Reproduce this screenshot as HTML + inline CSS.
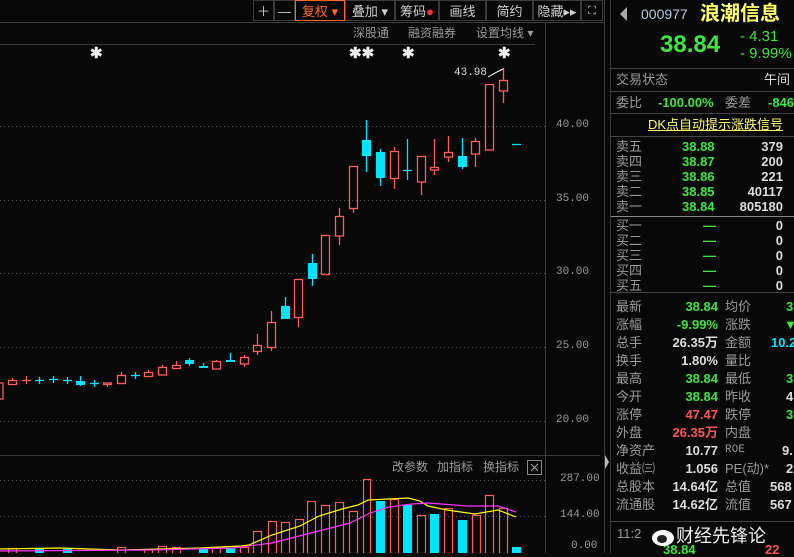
<!DOCTYPE html>
<html><head><meta charset="utf-8"><style>
body{margin:0;width:794px;height:553px;background:#080808;overflow:hidden;position:relative;font-family:"Liberation Sans","Noto Sans CJK SC",sans-serif;}
.a{position:absolute;white-space:nowrap;line-height:1;}
.g{color:#3ee63e}.w{color:#dcdcdc}.l{color:#9a9a9a;font-weight:normal}.r{color:#ff5555}.c{color:#00e5ff}
.tb{position:absolute;top:0;height:21px;border:1px solid #3a3a3a;color:#cfcfcf;font-size:13px;line-height:21px;text-align:center;box-sizing:border-box}
.rp div{position:absolute;white-space:nowrap;line-height:1;font-size:13px}
.st{position:absolute;color:#eee;font-size:15px;font-weight:bold;line-height:1}
</style></head><body>
<svg width="794" height="553" style="position:absolute;left:0;top:0">
<g stroke="#555" stroke-dasharray="1,3" stroke-width="1">
<line x1="0" y1="126.5" x2="545" y2="126.5"/><line x1="0" y1="200.5" x2="545" y2="200.5"/><line x1="0" y1="273.5" x2="545" y2="273.5"/><line x1="0" y1="347.5" x2="545" y2="347.5"/><line x1="0" y1="421.5" x2="545" y2="421.5"/>
<line x1="0" y1="480.5" x2="545" y2="480.5"/><line x1="0" y1="516.5" x2="545" y2="516.5"/>
</g>
<g stroke="#3a3a3a"><line x1="0" y1="22.5" x2="604" y2="22.5"/><line x1="0" y1="44.5" x2="535" y2="44.5"/><line x1="0" y1="455.5" x2="600" y2="455.5"/><line x1="545.5" y1="22" x2="545.5" y2="553"/><line x1="604.5" y1="0" x2="604.5" y2="553"/><line x1="610.5" y1="0" x2="610.5" y2="553"/></g>
<polygon points="605,455 609,462 605,469" fill="#bbb"/>
<g stroke="#ff5c5c" fill="none" stroke-width="1.3">
<rect x="-3" y="383" width="6" height="16"/>
<rect x="8.5" y="380.5" width="8" height="4"/><line x1="12.5" y1="378" x2="12.5" y2="380"/>
<line x1="22" y1="380.5" x2="31" y2="380.5"/><line x1="26.5" y1="376" x2="26.5" y2="384"/>
<rect x="103.5" y="383" width="8" height="1.5"/><line x1="107.5" y1="384" x2="107.5" y2="387"/>
<rect x="117.5" y="375.5" width="8" height="8"/><line x1="121.5" y1="372" x2="121.5" y2="375"/>
<rect x="144.5" y="372.5" width="8" height="4"/><line x1="148.5" y1="370" x2="148.5" y2="372"/>
<rect x="158.5" y="367.5" width="8" height="7.5"/><line x1="162.5" y1="365" x2="162.5" y2="367"/>
<rect x="172.5" y="365.5" width="8" height="3"/><line x1="176.5" y1="361" x2="176.5" y2="365"/>
<rect x="212.5" y="361.5" width="8" height="7.5"/><line x1="216.5" y1="360" x2="216.5" y2="361"/>
<rect x="240.5" y="357.5" width="8" height="6.5"/><line x1="244.5" y1="355" x2="244.5" y2="357"/><line x1="244.5" y1="364" x2="244.5" y2="367"/>
<rect x="253.5" y="345.5" width="8" height="6"/><line x1="257.5" y1="334" x2="257.5" y2="345"/><line x1="257.5" y1="351" x2="257.5" y2="355"/>
<rect x="267.5" y="322.5" width="8" height="25"/><line x1="271.5" y1="311" x2="271.5" y2="322"/><line x1="271.5" y1="347" x2="271.5" y2="351"/>
<rect x="294.5" y="279.5" width="8" height="38"/><line x1="298.5" y1="317" x2="298.5" y2="327"/>
<rect x="321.5" y="235.5" width="8" height="39"/>
<rect x="335.5" y="216.5" width="8" height="19.5"/><line x1="339.5" y1="208" x2="339.5" y2="216"/><line x1="339.5" y1="236" x2="339.5" y2="245"/>
<rect x="349.5" y="166.5" width="8" height="42"/><line x1="353.5" y1="208" x2="353.5" y2="213"/>
<rect x="390.5" y="151.5" width="8" height="27"/><line x1="394.5" y1="147" x2="394.5" y2="151"/><line x1="394.5" y1="178" x2="394.5" y2="189"/>
<rect x="417.5" y="156.5" width="8" height="25.5"/><line x1="421.5" y1="182" x2="421.5" y2="195"/>
<rect x="430.5" y="167.5" width="8" height="2.5"/><line x1="434.5" y1="139" x2="434.5" y2="167"/><line x1="434.5" y1="170" x2="434.5" y2="175"/>
<rect x="444.5" y="152.5" width="8" height="4.5"/><line x1="448.5" y1="136" x2="448.5" y2="152"/><line x1="448.5" y1="157" x2="448.5" y2="162"/>
<rect x="471.5" y="141.5" width="8" height="12.5"/><line x1="475.5" y1="138" x2="475.5" y2="141"/><line x1="475.5" y1="154" x2="475.5" y2="167"/>
<rect x="485.5" y="84.5" width="8" height="65.5"/>
<rect x="499.5" y="80.5" width="8" height="10.5"/><line x1="503.5" y1="68" x2="503.5" y2="80"/><line x1="503.5" y1="91" x2="503.5" y2="103"/>
</g>
<g fill="#00e5ff" stroke="#00e5ff" stroke-width="1.3">
<line x1="35" y1="380.5" x2="44" y2="380.5"/><line x1="39.5" y1="377" x2="39.5" y2="384"/>
<line x1="49" y1="379.5" x2="58" y2="379.5"/><line x1="53.5" y1="376" x2="53.5" y2="383"/>
<line x1="63" y1="380.5" x2="72" y2="380.5"/><line x1="67.5" y1="377" x2="67.5" y2="384"/>
<rect x="76" y="381" width="9" height="4" stroke="none"/><line x1="80.5" y1="376" x2="80.5" y2="386"/>
<line x1="90" y1="383.5" x2="99" y2="383.5"/><line x1="94.5" y1="380" x2="94.5" y2="387"/>
<line x1="131" y1="375.5" x2="140" y2="375.5"/><line x1="135.5" y1="372" x2="135.5" y2="379"/>
<rect x="185" y="360" width="9" height="4" stroke="none"/><line x1="189.5" y1="358" x2="189.5" y2="366"/>
<rect x="199" y="366" width="9" height="2" stroke="none"/><line x1="203.5" y1="363" x2="203.5" y2="367"/>
<rect x="226" y="360" width="9" height="2" stroke="none"/><line x1="230.5" y1="353" x2="230.5" y2="361"/>
<rect x="281" y="306" width="9" height="13" stroke="none"/><line x1="285.5" y1="297" x2="285.5" y2="306"/>
<rect x="308" y="263" width="9" height="16" stroke="none"/><line x1="312.5" y1="254" x2="312.5" y2="286"/>
<rect x="362" y="140" width="9" height="16" stroke="none"/><line x1="366.5" y1="120" x2="366.5" y2="172"/>
<rect x="376" y="152" width="9" height="26" stroke="none"/><line x1="380.5" y1="149" x2="380.5" y2="186"/>
<line x1="403" y1="170.5" x2="412" y2="170.5"/><line x1="407.5" y1="139" x2="407.5" y2="180"/>
<rect x="458" y="156" width="9" height="11" stroke="none"/><line x1="462.5" y1="138" x2="462.5" y2="169"/>
<line x1="512" y1="144.5" x2="521" y2="144.5"/>
</g>
<polyline points="488,77 497,72 503,69" stroke="#fff" fill="none"/>
<g stroke="#ff5c5c" fill="none" stroke-width="1.2">
<rect x="253.5" y="531.5" width="8" height="22"/><rect x="268.5" y="521.5" width="8" height="32"/><rect x="281.5" y="522.5" width="8" height="31"/><rect x="295.5" y="519.5" width="8" height="34"/>
<rect x="307.5" y="501.5" width="8" height="52"/><rect x="321.5" y="505.5" width="8" height="48"/><rect x="335.5" y="502.5" width="8" height="51"/><rect x="349.5" y="511.5" width="8" height="42"/><rect x="363.5" y="479.5" width="7" height="74"/>
<rect x="390.5" y="499.5" width="8" height="54"/><rect x="417.5" y="515.5" width="8" height="38"/><rect x="444.5" y="508.5" width="8" height="45"/><rect x="472.5" y="515.5" width="8" height="38"/><rect x="485.5" y="495.5" width="8" height="58"/><rect x="499.5" y="508.5" width="8" height="45"/>
<rect x="8.5" y="548.5" width="8" height="5"/><rect x="117.5" y="547.5" width="8" height="6"/><rect x="144.5" y="549.5" width="8" height="4"/><rect x="158.5" y="546.5" width="8" height="7"/><rect x="172.5" y="547.5" width="8" height="6"/><rect x="212.5" y="547.5" width="8" height="6"/><rect x="240.5" y="547.5" width="8" height="6"/>
</g>
<g fill="#00e5ff">
<rect x="376" y="501" width="9" height="52"/><rect x="403" y="505" width="9" height="48"/><rect x="430" y="514" width="9" height="39"/><rect x="458" y="520" width="9" height="33"/><rect x="512" y="547" width="9" height="6"/>
<rect x="35" y="549" width="9" height="4"/><rect x="63" y="549" width="9" height="4"/><rect x="199" y="549" width="9" height="4"/><rect x="226" y="548" width="9" height="5"/>
</g>
<polyline fill="none" stroke="#ffff00" stroke-width="1.2" points="0,549 60,548 120,550 200,548 241,546 249,545 272,535 300,526 319,516 342,509 358,505 368,500 389,499 408,498 420,501 428,506 447,510 475,514 498,510 516,517"/>
<polyline fill="none" stroke="#ff33ff" stroke-width="1.2" points="0,551 150,550 233,548 272,543 311,533 350,523 370,513 389,507 412,504 428,503 467,506 498,506 516,512"/>
<rect x="527.5" y="460.5" width="14" height="14" fill="none" stroke="#888"/>
<path d="M531 464l7 7M538 464l-7 7" stroke="#aaa"/>
<g stroke="#444"><line x1="611" y1="68.5" x2="794" y2="68.5"/><line x1="611" y1="91.5" x2="794" y2="91.5"/><line x1="611" y1="113.5" x2="794" y2="113.5"/><line x1="611" y1="136.5" x2="794" y2="136.5"/><line x1="611" y1="292.5" x2="794" y2="292.5"/><line x1="611" y1="521.5" x2="794" y2="521.5"/></g>
<line x1="611" y1="216.5" x2="794" y2="216.5" stroke="#888"/>
<polygon points="627,7 627,21 620,14" fill="#aaa"/>
</svg>
<div class="tb" style="left:253px;width:21px">＋</div>
<div class="tb" style="left:274px;width:21px">—</div>
<div class="tb" style="left:295px;width:50px;color:#ff6a1a;border-color:#ff6a1a">复权 ▾</div>
<div class="tb" style="left:345px;width:50px">叠加 ▾</div>
<div class="tb" style="left:395px;width:44px">筹码<span style="color:#f33">●</span></div>
<div class="tb" style="left:439px;width:47px">画线</div>
<div class="tb" style="left:486px;width:47px">简约</div>
<div class="tb" style="left:533px;width:48px">隐藏▸▸</div>
<div class="tb" style="left:581px;width:22px;font-size:11px">⛶</div>
<div class="a l" style="left:353px;top:27px;font-size:12px">深股通</div>
<div class="a l" style="left:408px;top:27px;font-size:12px">融资融券</div>
<div class="a l" style="left:476px;top:27px;font-size:12px">设置均线 ▾</div>
<div class="st" style="left:90px;top:46px">✱</div><div class="st" style="left:349px;top:46px">✱✱</div><div class="st" style="left:402px;top:46px">✱</div><div class="st" style="left:498px;top:46px">✱</div>
<div class="a w" style="left:454px;top:68px;font-size:11px;font-family:'Liberation Mono',monospace">43.98</div>
<div class="a l" style="left:556px;top:120px;font-size:11px;font-family:'Liberation Mono',monospace">40.00</div>
<div class="a l" style="left:556px;top:194px;font-size:11px;font-family:'Liberation Mono',monospace">35.00</div>
<div class="a l" style="left:556px;top:267px;font-size:11px;font-family:'Liberation Mono',monospace">30.00</div>
<div class="a l" style="left:556px;top:341px;font-size:11px;font-family:'Liberation Mono',monospace">25.00</div>
<div class="a l" style="left:556px;top:415px;font-size:11px;font-family:'Liberation Mono',monospace">20.00</div>
<div class="a l" style="left:560px;top:474px;font-size:11px;font-family:'Liberation Mono',monospace">287.00</div>
<div class="a l" style="left:560px;top:510px;font-size:11px;font-family:'Liberation Mono',monospace">144.00</div>
<div class="a l" style="left:571px;top:541px;font-size:11px;font-family:'Liberation Mono',monospace">0.00</div>
<div class="a l" style="left:392px;top:461px;font-size:12px">改参数</div>
<div class="a l" style="left:437px;top:461px;font-size:12px">加指标</div>
<div class="a l" style="left:483px;top:461px;font-size:12px">换指标</div>
<div class="rp">
<div style="left:641px;top:7px;font-size:14px;color:#b8c8e0">000977</div>
<div style="left:700px;top:4px;font-size:20px;color:#ffff66;font-weight:bold">浪潮信息</div>
<div style="left:660px;top:33px;font-size:24px;font-weight:bold" class="g">38.84</div>
<div style="left:740px;top:29px;font-size:15px" class="g">- 4.31</div>
<div style="left:740px;top:46px;font-size:15px" class="g">- 9.99%</div>
<div style="left:616px;top:73px" class="l">交易状态</div><div style="left:764px;top:73px" class="w">午间</div>
<div style="left:616px;top:96px" class="l">委比</div><div style="left:658px;top:96px;font-weight:bold" class="g">-100.00%</div><div style="left:725px;top:96px" class="l">委差</div><div style="left:768px;top:96px;font-weight:bold" class="g">-846</div>
<div style="left:648px;top:118px;color:#ffff66;text-decoration:underline">DK点自动提示涨跌信号</div>
</div>
<div class="rp" style="font-weight:bold">
<div style="left:616px;top:140px" class="l">卖五</div><div style="left:682px;top:140px" class="g">38.88</div><div style="right:11px;top:140px" class="w">379</div>
<div style="left:616px;top:155px" class="l">卖四</div><div style="left:682px;top:155px" class="g">38.87</div><div style="right:11px;top:155px" class="w">200</div>
<div style="left:616px;top:170px" class="l">卖三</div><div style="left:682px;top:170px" class="g">38.86</div><div style="right:11px;top:170px" class="w">221</div>
<div style="left:616px;top:185px" class="l">卖二</div><div style="left:682px;top:185px" class="g">38.85</div><div style="right:11px;top:185px" class="w">40117</div>
<div style="left:616px;top:200px" class="l">卖一</div><div style="left:682px;top:200px" class="g">38.84</div><div style="right:11px;top:200px" class="w">805180</div>
<div style="left:616px;top:219px" class="l">买一</div><div style="left:703px;top:219px" class="g">—</div><div style="right:11px;top:219px" class="w">0</div>
<div style="left:616px;top:234px" class="l">买二</div><div style="left:703px;top:234px" class="g">—</div><div style="right:11px;top:234px" class="w">0</div>
<div style="left:616px;top:249px" class="l">买三</div><div style="left:703px;top:249px" class="g">—</div><div style="right:11px;top:249px" class="w">0</div>
<div style="left:616px;top:264px" class="l">买四</div><div style="left:703px;top:264px" class="g">—</div><div style="right:11px;top:264px" class="w">0</div>
<div style="left:616px;top:279px" class="l">买五</div><div style="left:703px;top:279px" class="g">—</div><div style="right:11px;top:279px" class="w">0</div>
</div>
<div class="rp" style="font-weight:bold">
<div style="left:616px;top:300px" class="l">最新</div><div style="right:76px;top:300px" class="g">38.84</div><div style="left:725px;top:300px" class="l">均价</div><div style="left:786px;top:300px" class="g">3</div>
<div style="left:616px;top:318px" class="l">涨幅</div><div style="right:76px;top:318px" class="g">-9.99%</div><div style="left:725px;top:318px" class="l">涨跌</div><div style="left:784px;top:318px" class="g">▼</div>
<div style="left:616px;top:336px" class="l">总手</div><div style="right:76px;top:336px" class="w">26.35万</div><div style="left:725px;top:336px" class="l">金额</div><div style="left:771px;top:336px" class="c">10.2</div>
<div style="left:616px;top:354px" class="l">换手</div><div style="right:76px;top:354px" class="w">1.80%</div><div style="left:725px;top:354px" class="l">量比</div>
<div style="left:616px;top:372px" class="l">最高</div><div style="right:76px;top:372px" class="g">38.84</div><div style="left:725px;top:372px" class="l">最低</div><div style="left:786px;top:372px" class="g">3</div>
<div style="left:616px;top:390px" class="l">今开</div><div style="right:76px;top:390px" class="g">38.84</div><div style="left:725px;top:390px" class="l">昨收</div><div style="left:786px;top:390px" class="w">4</div>
<div style="left:616px;top:408px" class="l">涨停</div><div style="right:76px;top:408px" class="r">47.47</div><div style="left:725px;top:408px" class="l">跌停</div><div style="left:786px;top:408px" class="g">3</div>
<div style="left:616px;top:426px" class="l">外盘</div><div style="right:76px;top:426px" class="r">26.35万</div><div style="left:725px;top:426px" class="l">内盘</div>
<div style="left:616px;top:444px" class="l">净资产</div><div style="right:76px;top:444px" class="w">10.77</div><div style="left:725px;top:445px;font-size:11px;font-family:'Liberation Mono',monospace" class="l">ROE</div><div style="left:782px;top:444px" class="w">9.</div>
<div style="left:616px;top:462px" class="l">收益㈢</div><div style="right:76px;top:462px" class="w">1.056</div><div style="left:725px;top:462px" class="l">PE(动)*</div><div style="left:786px;top:462px" class="w">2</div>
<div style="left:616px;top:480px" class="l">总股本</div><div style="right:76px;top:480px" class="w">14.64亿</div><div style="left:725px;top:480px" class="l">总值</div><div style="left:770px;top:480px" class="w">568</div>
<div style="left:616px;top:498px" class="l">流通股</div><div style="right:76px;top:498px" class="w">14.62亿</div><div style="left:725px;top:498px" class="l">流值</div><div style="left:770px;top:498px" class="w">567</div>
<div style="left:617px;top:527px" class="l">11:2</div><div style="left:676px;top:527px;font-size:18px;color:#eee;font-weight:normal">财经先锋论</div>
<div style="left:663px;top:543px" class="g">38.84</div><div style="left:765px;top:543px" class="r">22</div>
</div>
<svg width="28" height="22" style="position:absolute;left:650px;top:525px"><ellipse cx="13" cy="13" rx="11" ry="8" fill="#fff"/><ellipse cx="12" cy="14" rx="5" ry="4" fill="#222"/></svg>
</body></html>
